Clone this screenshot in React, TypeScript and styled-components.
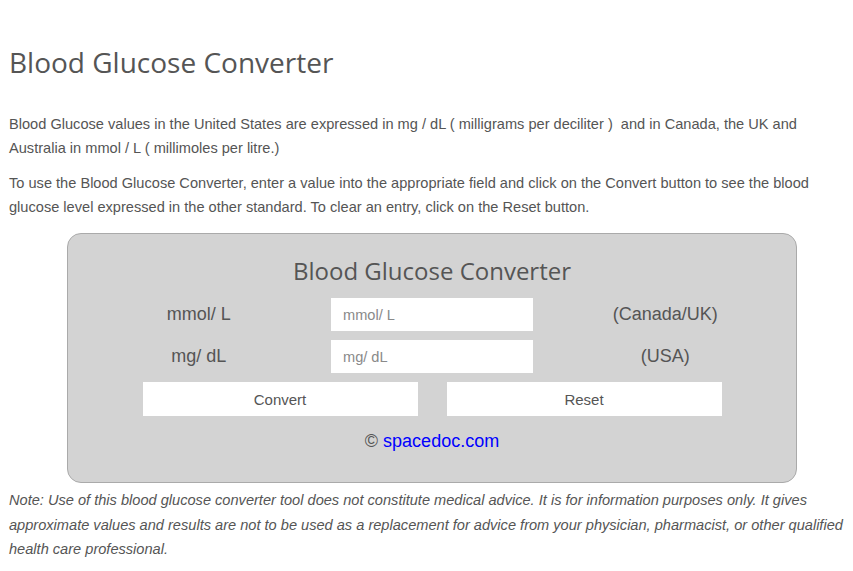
import * as React from "react";
import styled, { createGlobalStyle } from "styled-components";

const GlobalStyle = createGlobalStyle`
  html, body {
    margin: 0;
    padding: 0;
    background: #fff;
  }
  body {
    font-family: "Liberation Sans", Arial, sans-serif;
    color: #555;
  }
`;

const Page = styled.div`
  padding: 0 9px;
  width: 853px;
  box-sizing: border-box;
`;

const Title = styled.h1`
  font-family: "Open Sans", sans-serif;
  font-weight: 400;
  font-size: 28px;
  line-height: 36px;
  color: #555;
  margin: 0;
  padding-top: 44px;
  padding-bottom: 32px;
`;

const Para = styled.p`
  font-size: 14.6px;
  line-height: 24px;
  margin: 0 0 11px;
`;

const Converter = styled.div`
  margin: 14px 0 0 58px;
  width: 730px;
  height: 250px;
  box-sizing: border-box;
  background: #d3d3d3;
  border: 1px solid #aaa;
  border-radius: 14px;
  padding: 22px 14px 0;
  display: flex;
  flex-direction: column;
  align-items: center;
`;

const BoxTitle = styled.h2`
  font-family: "Open Sans", sans-serif;
  font-weight: 400;
  font-size: 24px;
  line-height: 30px;
  color: #555;
  margin: 0 0 12px;
`;

const Row = styled.div`
  display: grid;
  grid-template-columns: repeat(3, 1fr);
  width: 700px;
  align-items: center;
  margin-bottom: 9px;
`;

const Label = styled.div`
  text-align: center;
  font-size: 18px;
  color: #555;
`;

const Field = styled.input`
  justify-self: center;
  width: 202px;
  height: 33px;
  box-sizing: border-box;
  border: none;
  background: #fff;
  padding: 0 12px;
  font-family: "Liberation Sans", Arial, sans-serif;
  font-size: 14.6px;
  color: #555;
  outline: none;
  &::placeholder {
    color: #8a8a8a;
  }
`;

const Buttons = styled.div`
  display: flex;
  gap: 29px;
  justify-content: center;
`;

const Button = styled.button`
  width: 275px;
  height: 34px;
  border: none;
  background: #fff;
  font-family: "Liberation Sans", Arial, sans-serif;
  font-size: 15px;
  color: #555;
  cursor: pointer;
`;

const Credit = styled.div`
  margin-top: 15px;
  font-size: 18px;
  color: #555;
`;

const Link = styled.a`
  color: #00f;
  text-decoration: none;
`;

const Note = styled.p`
  font-size: 14.6px;
  line-height: 24.5px;
  font-style: italic;
  margin: 5px 0 0;
`;

export default function App() {
  return (
    <Page>
      <GlobalStyle />
      <Title>Blood Glucose Converter</Title>
      <Para>
        Blood Glucose values in the United States are expressed in mg / dL ( milligrams per deciliter )&nbsp; and in
        Canada, the UK and Australia in mmol / L ( millimoles per litre.)
      </Para>
      <Para>
        To use the Blood Glucose Converter, enter a value into the appropriate field and click on the Convert button
        to see the blood glucose level expressed in the other standard. To clear an entry, click on the Reset button.
      </Para>
      <Converter>
        <BoxTitle>Blood Glucose Converter</BoxTitle>
        <Row>
          <Label>mmol/ L</Label>
          <Field placeholder="mmol/ L" />
          <Label>(Canada/UK)</Label>
        </Row>
        <Row>
          <Label>mg/ dL</Label>
          <Field placeholder="mg/ dL" />
          <Label>(USA)</Label>
        </Row>
        <Buttons>
          <Button>Convert</Button>
          <Button>Reset</Button>
        </Buttons>
        <Credit>
          © <Link href="#">spacedoc.com</Link>
        </Credit>
      </Converter>
      <Note>
        Note: Use of this blood glucose converter tool does not constitute medical advice. It is for information
        purposes only. It gives approximate values and results are not to be used as a replacement for advice from
        your physician, pharmacist, or other qualified health care professional.
      </Note>
    </Page>
  );
}
